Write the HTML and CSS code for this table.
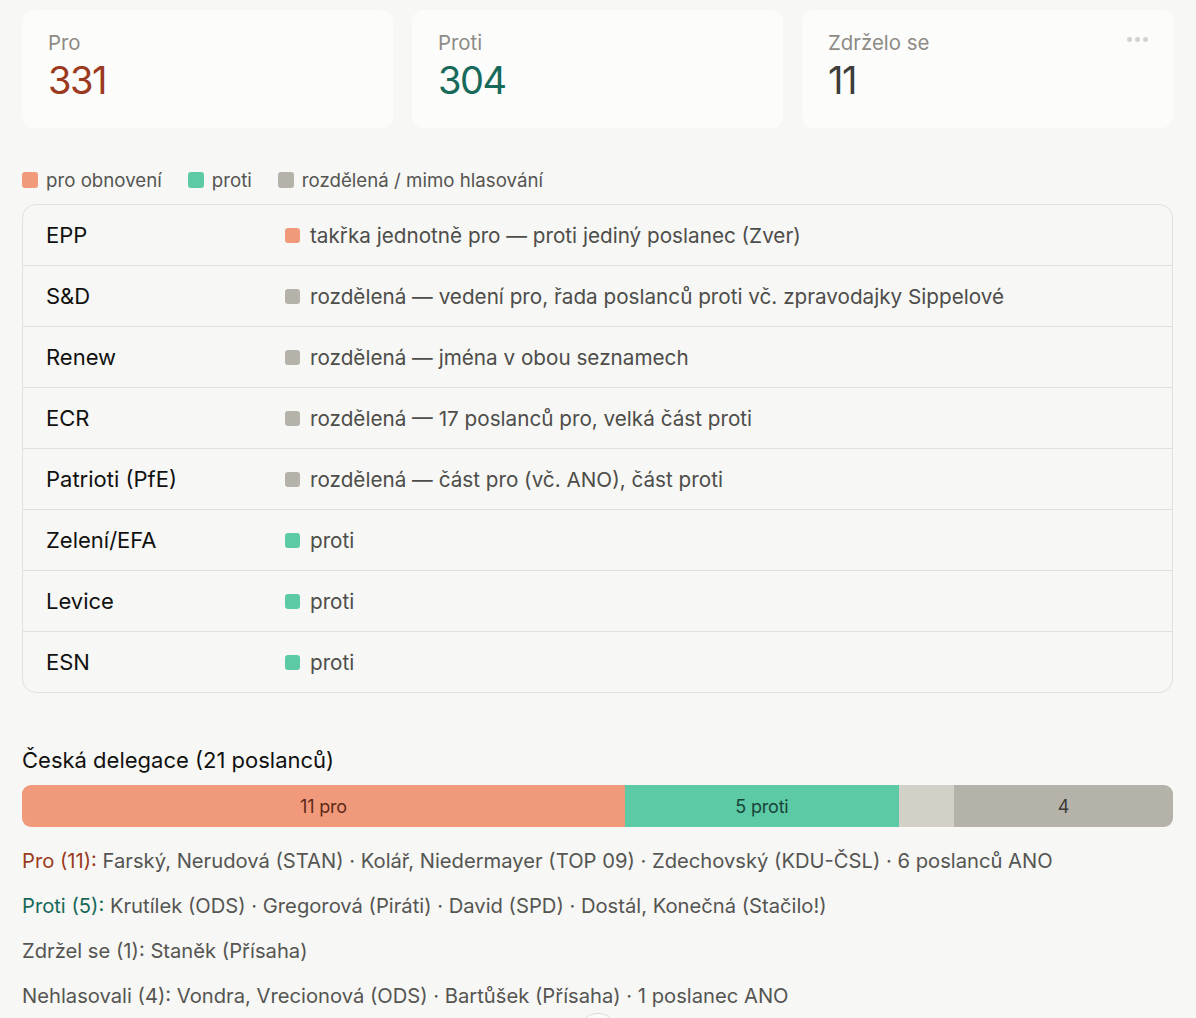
FILE: index.html
```html
<!DOCTYPE html>
<html lang="cs">
<head>
<meta charset="utf-8">
<title>Hlasování</title>
<link rel="stylesheet" href="styles.css">
</head>
<body>
<div class="page">
  <div class="cards">
    <div class="card">
      <div class="card-label">Pro</div>
      <div class="card-num num-pro">331</div>
    </div>
    <div class="card">
      <div class="card-label">Proti</div>
      <div class="card-num num-proti">304</div>
    </div>
    <div class="card">
      <div class="card-label">Zdrželo se</div>
      <div class="card-num num-abs">11</div>
      <div class="dots"><span></span><span></span><span></span></div>
    </div>
  </div>

  <div class="legend">
    <div class="legend-item"><span class="sq sq-pro"></span>pro obnovení</div>
    <div class="legend-item"><span class="sq sq-proti"></span>proti</div>
    <div class="legend-item"><span class="sq sq-split"></span>rozdělená / mimo hlasování</div>
  </div>

  <div class="table">
    <div class="row"><div class="name">EPP</div><div class="desc"><span class="sq sm sq-pro"></span>takřka jednotně pro — proti jediný poslanec (Zver)</div></div>
    <div class="row"><div class="name">S&amp;D</div><div class="desc"><span class="sq sm sq-split"></span>rozdělená — vedení pro, řada poslanců proti vč. zpravodajky Sippelové</div></div>
    <div class="row"><div class="name">Renew</div><div class="desc"><span class="sq sm sq-split"></span>rozdělená — jména v obou seznamech</div></div>
    <div class="row"><div class="name">ECR</div><div class="desc"><span class="sq sm sq-split"></span>rozdělená — 17 poslanců pro, velká část proti</div></div>
    <div class="row"><div class="name">Patrioti (PfE)</div><div class="desc"><span class="sq sm sq-split"></span>rozdělená — část pro (vč. ANO), část proti</div></div>
    <div class="row"><div class="name">Zelení/EFA</div><div class="desc"><span class="sq sm sq-proti"></span>proti</div></div>
    <div class="row"><div class="name">Levice</div><div class="desc"><span class="sq sm sq-proti"></span>proti</div></div>
    <div class="row"><div class="name">ESN</div><div class="desc"><span class="sq sm sq-proti"></span>proti</div></div>
  </div>

  <h2 class="heading">Česká delegace (21 poslanců)</h2>
  <div class="bar">
    <div class="seg seg-pro" style="flex-grow:11">11 pro</div>
    <div class="seg seg-proti" style="flex-grow:5">5 proti</div>
    <div class="seg seg-abs" style="flex-grow:1"></div>
    <div class="seg seg-none" style="flex-grow:4">4</div>
  </div>

  <div class="lists">
    <p><span class="lbl-pro">Pro (11):</span> Farský, Nerudová (STAN) · Kolář, Niedermayer (TOP 09) · Zdechovský (KDU-ČSL) · 6 poslanců ANO</p>
    <p><span class="lbl-proti">Proti (5):</span> Krutílek (ODS) · Gregorová (Piráti) · David (SPD) · Dostál, Konečná (Stačilo!)</p>
    <p>Zdržel se (1): Staněk (Přísaha)</p>
    <p>Nehlasovali (4): Vondra, Vrecionová (ODS) · Bartůšek (Přísaha) · 1 poslanec ANO</p>
  </div>
</div>
<div class="scroll-btn"></div>
</body>
</html>
```

FILE: styles.css
```css
* { box-sizing: border-box; }
html, body { margin: 0; padding: 0; }
body {
  background: #f7f7f5;
  font-family: Inter, "Noto Sans", sans-serif;
  color: #1a1a19;
  overflow: hidden;
  height: 1018px;
}
.page {
  width: 1151px;
  margin-left: 22px;
  padding-top: 10px;
}
.cards {
  display: grid;
  grid-template-columns: 1fr 1fr 1fr;
  gap: 19px;
}
.card {
  position: relative;
  background: #fcfcfb;
  border-radius: 12px;
  height: 118px;
  padding: 21px 26px 0;
}
.card-label {
  font-size: 20.4px;
  color: #8c8b86;
  line-height: 24px;
}
.card-num {
  font-size: 38px;
  line-height: 46px;
  margin-top: 2px;
  letter-spacing: -1.5px;
}
.num-pro { color: #9b3a1e; }
.num-proti { color: #17695a; }
.num-abs { color: #3d3d3a; }
.dots {
  position: absolute;
  top: 27px;
  right: 25px;
  display: flex;
  gap: 3px;
}
.dots span {
  width: 5px;
  height: 5px;
  border-radius: 50%;
  background: #d3d2ce;
}
.legend {
  display: flex;
  gap: 26px;
  margin-top: 42px;
  height: 20px;
  align-items: center;
}
.legend-item {
  display: flex;
  align-items: center;
  font-size: 18.7px;
  color: #555552;
}
.sq {
  width: 16px;
  height: 16px;
  border-radius: 3px;
  display: inline-block;
  margin-right: 8px;
  flex: none;
}
.sq.sm {
  width: 15px;
  height: 15px;
  margin-right: 10px;
}
.sq-pro { background: #f09a7b; }
.sq-proti { background: #5ccaa5; }
.sq-split { background: #b5b2a9; }
.table {
  margin-top: 14px;
  border: 1px solid #e1e0dc;
  border-radius: 14px;
  overflow: hidden;
}
.row {
  display: grid;
  grid-template-columns: 239px 1fr;
  height: 61px;
  align-items: center;
  padding-left: 23px;
  border-top: 1px solid #e1e0dc;
}
.row:first-child { border-top: none; height: 60px; }
.name {
  font-size: 22px;
  color: #111110;
}
.desc {
  display: flex;
  align-items: center;
  font-size: 20.7px;
  color: #4d4d4a;
}
.heading {
  margin: 53px 0 0;
  font-size: 22px;
  font-weight: 400;
  line-height: 28px;
  color: #111110;
}
.bar {
  display: flex;
  margin-top: 11px;
  height: 42px;
  border-radius: 9px;
  overflow: hidden;
}
.seg {
  flex-basis: 0;
  display: flex;
  align-items: center;
  justify-content: center;
  font-size: 18px;
  letter-spacing: -0.2px;
}
.seg-pro { background: #f09a7b; color: #5e2a18; }
.seg-proti { background: #5ccaa5; color: #17443a; }
.seg-abs { background: #d3d0c7; }
.seg-none { background: #b5b2a9; color: #3a3a37; }
.lists { margin-top: 20px; }
.lists p {
  margin: 0;
  font-size: 20.2px;
  line-height: 28px;
  height: 45px;
  color: #555552;
}
.lbl-pro { color: #9b3a1e; }
.lbl-proti { color: #17695a; }
.scroll-btn {
  position: fixed;
  top: 1013px;
  left: 578px;
  width: 40px;
  height: 40px;
  border-radius: 50%;
  background: #fcfcfb;
  border: 1px solid #dcdbd7;
}
```
